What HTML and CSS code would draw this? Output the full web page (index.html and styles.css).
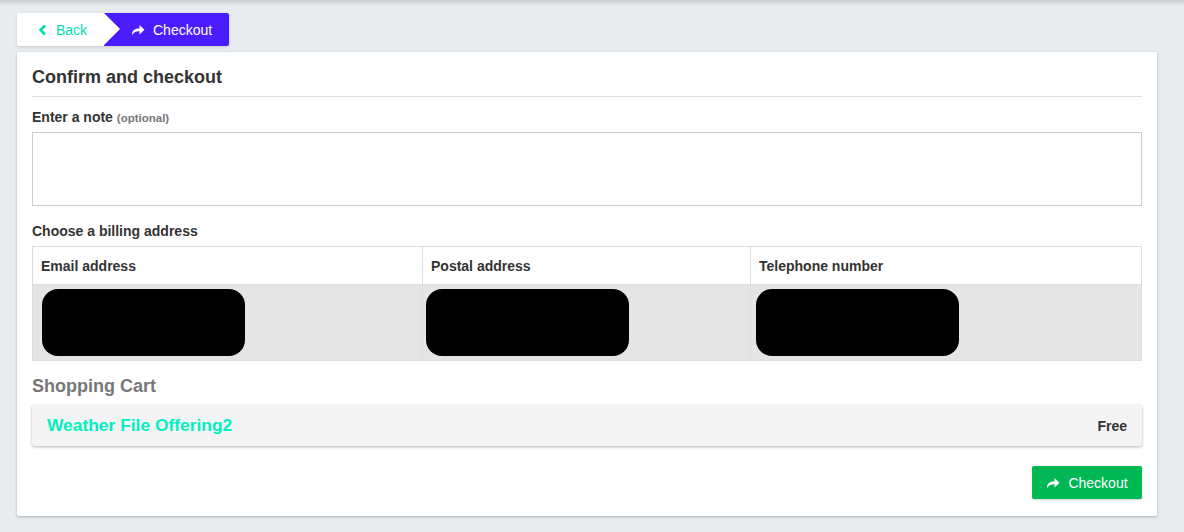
FILE: index.html
```html
<!DOCTYPE html>
<html>
<head>
<meta charset="utf-8">
<link rel="stylesheet" href="styles.css">
</head>
<body>
<div class="topshade"></div>
<div class="page">
  <nav class="crumbs">
    <a class="crumb back">
      <svg class="ico" width="10" height="12" viewBox="0 0 10 12"><path d="M7 1.5 L2.5 6 L7 10.5" fill="none" stroke="currentColor" stroke-width="2.6"/></svg>
      Back
    </a>
    <a class="crumb active">
      <svg class="ico" width="14" height="12" viewBox="0 0 14 12"><path d="M1 11.5 C1 6 4 4.5 8.5 4.5 V1 L13.5 5.8 L8.5 10.5 V7.2 C5 7.2 2.5 8 1 11.5 Z" fill="currentColor"/></svg>
      Checkout
    </a>
  </nav>
  <section class="card">
    <h2 class="title">Confirm and checkout</h2>
    <label class="label">Enter a note <span class="opt">(optional)</span></label>
    <textarea class="note"></textarea>
    <div class="label billing">Choose a billing address</div>
    <table class="addr">
      <thead>
        <tr><th class="c1">Email address</th><th class="c2">Postal address</th><th>Telephone number</th></tr>
      </thead>
      <tbody>
        <tr><td><span class="redact"></span></td><td><span class="redact"></span></td><td><span class="redact"></span></td></tr>
      </tbody>
    </table>
    <h3 class="cart-title">Shopping Cart</h3>
    <div class="cart-item">
      <span class="item-name">Weather File Offering2</span>
      <span class="price">Free</span>
    </div>
    <div class="actions">
      <button class="btn-checkout">
        <svg class="ico" width="14" height="12" viewBox="0 0 14 12"><path d="M1 11.5 C1 6 4 4.5 8.5 4.5 V1 L13.5 5.8 L8.5 10.5 V7.2 C5 7.2 2.5 8 1 11.5 Z" fill="currentColor"/></svg>
        Checkout
      </button>
    </div>
  </section>
</div>
</body>
</html>
```
FILE: styles.css
```css
* { box-sizing: border-box; }
html, body { margin: 0; padding: 0; }
body {
  background: #e9ecef;
  font-family: "Liberation Sans", Arial, sans-serif;
  color: #333;
  width: 1184px;
  height: 532px;
  overflow: hidden;
  position: relative;
}
.topshade {
  height: 6px;
  background: linear-gradient(#c9ccd0, #e9ecef);
  margin-bottom: 7px;
}
.page {
  padding: 0 27px 0 17px;
}
.crumbs {
  display: flex;
  height: 33px;
  width: 212px;
  border-radius: 2px;
  box-shadow: 0 1px 3px rgba(0,0,0,0.15);
  overflow: hidden;
}
.crumb {
  display: flex;
  align-items: center;
  font-size: 14px;
  text-decoration: none;
}
.crumb .ico { margin-right: 8px; }
.back {
  background: #fff;
  color: #00e0b0;
  width: 87px;
  padding-left: 21px;
  position: relative;
  z-index: 1;
}
.back::after {
  content: "";
  position: absolute;
  right: -16px;
  top: 0;
  border-top: 16.5px solid transparent;
  border-bottom: 16.5px solid transparent;
  border-left: 16px solid #fff;
}
.active {
  background: #4b1cff;
  color: #fff;
  flex: 1;
  padding-left: 27px;
}
.card {
  margin-top: 6px;
  background: #fff;
  height: 464px;
  padding: 0 15px;
  box-shadow: 0 1px 3px rgba(0,0,0,0.25);
  border-radius: 2px;
  display: flex;
  flex-direction: column;
}
.title {
  margin: 0;
  font-size: 18px;
  line-height: 20px;
  font-weight: bold;
  color: #333;
  padding: 15px 0 9px;
  border-bottom: 1px solid #ddd;
}
.label {
  display: block;
  font-size: 14px;
  font-weight: bold;
  color: #333;
  margin-top: 13px;
  line-height: 15px;
}
.opt { font-size: 11.5px; color: #777; }
.note {
  display: block;
  margin-top: 6px;
  width: 100%;
  height: 74px;
  border: 1px solid #ccc;
  resize: none;
  border-radius: 0;
}
.billing { margin-top: 18px; }
.addr {
  margin-top: 7px;
  width: 100%;
  border-collapse: collapse;
  font-size: 14px;
}
.addr th, .addr td {
  border: 1px solid #ddd;
  text-align: left;
  padding: 0 8px;
}
.addr th { height: 38px; font-weight: bold; color: #333; }
.addr .c1 { width: 390px; }
.addr .c2 { width: 328px; }
.addr td { height: 76px; background: #e5e5e5; padding: 4px 9px 0 9px; vertical-align: top; }
.addr td:first-child { padding-left: 9px; }
.addr td:nth-child(2) { padding-left: 3px; }
.addr td:nth-child(3) { padding-left: 5px; }
.redact {
  display: block;
  width: 203px;
  height: 67px;
  background: #000;
  border-radius: 16px;
}
.cart-title {
  margin: 15px 0 0;
  font-size: 18px;
  color: #777;
  line-height: 20px;
}
.cart-item {
  margin-top: 9px;
  height: 41px;
  background: #f4f4f4;
  box-shadow: 0 1px 3px rgba(0,0,0,0.3);
  border-radius: 2px;
  display: flex;
  align-items: center;
  justify-content: space-between;
  padding: 0 15px;
}
.item-name { color: #00f0bf; font-weight: bold; font-size: 17.4px; }
.price { font-weight: bold; font-size: 14px; color: #333; }
.actions {
  display: flex;
  justify-content: flex-end;
  margin-top: 20px;
}
.btn-checkout {
  background: #00b853;
  color: #fff;
  border: none;
  border-radius: 2px;
  width: 110px;
  height: 33px;
  font-family: inherit;
  font-size: 14px;
  display: flex;
  align-items: center;
  justify-content: center;
  box-shadow: 0 1px 2px rgba(0,0,0,0.2);
}
.btn-checkout .ico { margin-right: 8px; }
```
